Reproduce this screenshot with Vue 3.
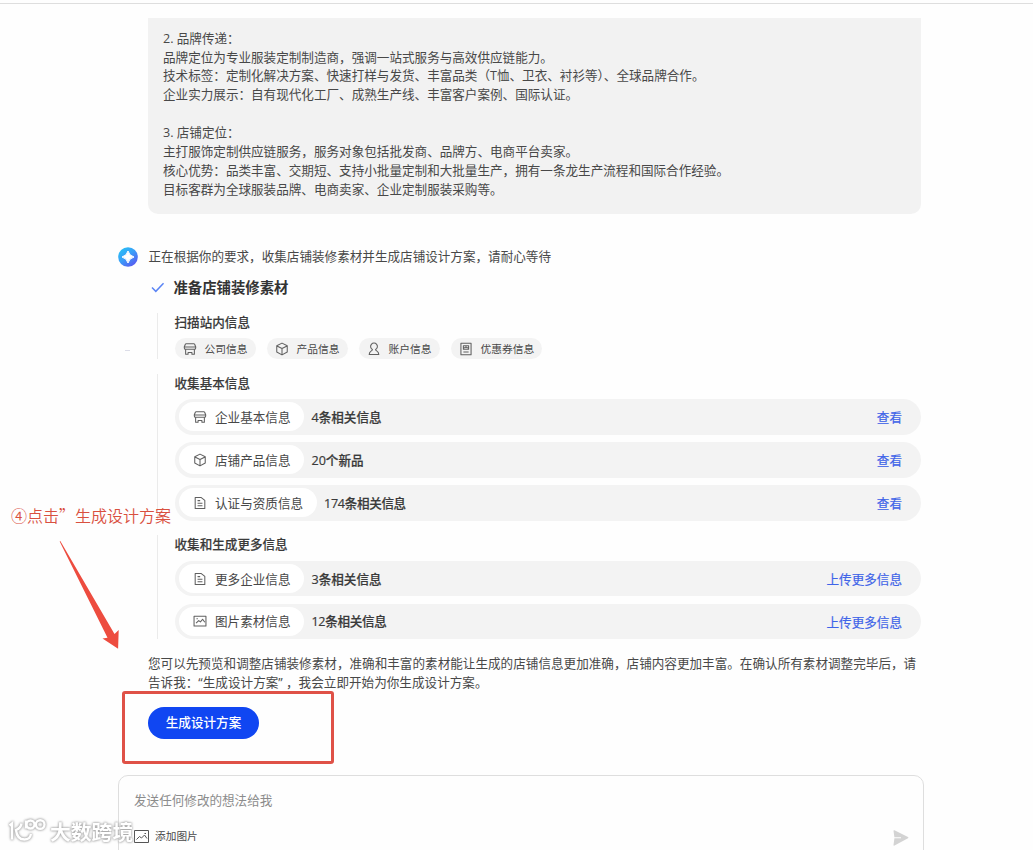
<script setup>
const brief = [
  '2. 品牌传递：',
  '品牌定位为专业服装定制制造商，强调一站式服务与高效供应链能力。',
  '技术标签：定制化解决方案、快速打样与发货、丰富品类（T恤、卫衣、衬衫等）、全球品牌合作。',
  '企业实力展示：自有现代化工厂、成熟生产线、丰富客户案例、国际认证。',
  '',
  '3. 店铺定位：',
  '主打服饰定制供应链服务，服务对象包括批发商、品牌方、电商平台卖家。',
  '核心优势：品类丰富、交期短、支持小批量定制和大批量生产，拥有一条龙生产流程和国际合作经验。',
  '目标客群为全球服装品牌、电商卖家、企业定制服装采购等。',
]

const icons = {
  shop: 'M3.600 2h8.800q.600 0 .900.600l1.200 2.900v1.300q0 1.500-1.500 1.500H3q-1.500 0-1.500-1.500V5.500l1.200-2.900q.300-.600.900-.600zM1.800 5.600h12.400M3 8.500V14h2.800v-2h4.400v2H13V8.500',
  box: 'M8 1.300l6 3v7.200l-6 3.200l-6-3.200V4.300zM2.200 4.500l5.800 3l5.800-3M8 7.500v7',
  user: 'M6.200 8.600a3.900 3.900 0 1 1 3.600 0c0 1.800 3.700 1.400 3.700 5.600h-11c0-4.200 3.700-3.800 3.700-5.600z',
  coupon: 'M2.200 1.500h11.600v13H2.200zM5 4.300h6v4H5zM5 6.500h2l1-1l1 1h2M5 11.500h6',
  doc: 'M2.500 1.800h7L13.500 5v9.200h-11zM5.200 5.300h3M5.200 8.200h5.600M5.200 11.200h5.600',
  image: 'M1.200 2.500h13.600v11.200H1.200zM3.500 10.500l3-3l2 1.500l2.500-3l2.500 3.500M4 5.500h1.500',
}

const chips = [
  { icon: 'shop', label: '公司信息' },
  { icon: 'box', label: '产品信息' },
  { icon: 'user', label: '账户信息' },
  { icon: 'coupon', label: '优惠券信息' },
]

const groups = [
  {
    title: '收集基本信息',
    rows: [
      { icon: 'shop', label: '企业基本信息', count: '4条相关信息', action: '查看' },
      { icon: 'box', label: '店铺产品信息', count: '20个新品', action: '查看' },
      { icon: 'doc', label: '认证与资质信息', count: '174条相关信息', action: '查看', tight: true },
    ],
  },
  {
    title: '收集和生成更多信息',
    rows: [
      { icon: 'doc', label: '更多企业信息', count: '3条相关信息', action: '上传更多信息' },
      { icon: 'image', label: '图片素材信息', count: '12条相关信息', action: '上传更多信息', tight: true },
    ],
  },
]
</script>

<template>
  <main class="page">
    <div class="chat">
      <section class="brief">
        <p v-for="(line, i) in brief" :key="i">{{ line }}</p>
      </section>

      <div class="status">
        <svg class="avatar" viewBox="0 0 20 20">
          <defs>
            <linearGradient id="avatarFill" x1="0" y1="0" x2="0.8" y2="1">
              <stop offset="0" stop-color="#25c8f5" />
              <stop offset="0.5" stop-color="#3a9ff8" />
              <stop offset="1" stop-color="#5a55f0" />
            </linearGradient>
          </defs>
          <circle cx="10" cy="10" r="9.8" fill="url(#avatarFill)" />
          <path d="M10 4q1.200 4.800 6 6q-4.800 1.200-6 6q-1.200-4.800-6-6q4.800-1.200 6-6z" fill="#fff" stroke="#fff" stroke-width="1" stroke-linejoin="round" />
        </svg>
        <span>正在根据你的要求，收集店铺装修素材并生成店铺设计方案，请耐心等待</span>
      </div>

      <div class="body">
        <h2 class="step">
          <svg class="check" viewBox="0 0 14 11"><path d="M1 5.500l4 4L13 1" /></svg>
          <span>准备店铺装修素材</span>
        </h2>

        <section class="group scan">
          <h3>扫描站内信息</h3>
          <div class="chips">
            <span v-for="c in chips" :key="c.label" class="chip">
              <svg class="icon" viewBox="0 0 16 16"><path :d="icons[c.icon]" /></svg>
              <span>{{ c.label }}</span>
            </span>
          </div>
        </section>

        <section v-for="g in groups" :key="g.title" class="group">
          <h3>{{ g.title }}</h3>
          <div class="rows">
            <div v-for="r in g.rows" :key="r.label" class="row">
              <span class="pill">
                <svg class="icon" viewBox="0 0 16 16"><path :d="icons[r.icon]" /></svg>
                <span>{{ r.label }}</span>
              </span>
              <span class="count" :class="{ tight: r.tight }">{{ r.count }}</span>
              <a class="action">{{ r.action }}</a>
            </div>
          </div>
        </section>

        <p class="hint">您可以先预览和调整店铺装修素材，准确和丰富的素材能让生成的店铺信息更加准确，店铺内容更加丰富。在确认所有素材调整完毕后，请<br>告诉我：“生成设计方案” ，我会立即开始为你生成设计方案。</p>
        <button class="generate">生成设计方案</button>
      </div>

      <div class="composer">
        <div class="placeholder">发送任何修改的想法给我</div>
        <div class="tools">
          <svg class="picture" viewBox="0 0 15 13"><path d="M.5.500h14v12H.5zM2.500 9.500l3-3l2 1.500l3-3l2.500 3.500M10.500 3.500h1.500" /></svg>
          <span>添加图片</span>
          <svg class="send" viewBox="0 0 16 16"><path d="M.5.800Q.5 0 1.500.300L15 7q1 .700 0 1.300L1.500 15.600Q.5 16 .5 15L1.400 8.200H8V7.200H1.400z" /></svg>
        </div>
      </div>
    </div>

    <span class="speck"></span>
    <div class="note">④点击”生成设计方案</div>
    <svg class="arrow" viewBox="0 0 62 110"><path d="M1.300 1L55.500 94l4.200-4l-.600 18.700L43.500 98.500l5-.800L.700 1.500z" /></svg>
    <div class="frame"></div>
    <div class="watermark">
      <svg viewBox="0 0 40 28">
        <path d="M1.500 8.500L4 6.500v16M13.500 6.500q-.500 4.500-5.500 6.500q1 9.500 8.500 9.500q5.500 0 6.500-5.500" />
        <path d="M18 3.500v8" />
        <circle cx="22.500" cy="7.500" r="4" />
        <circle cx="32.200" cy="7.500" r="4.300" />
      </svg>
      <span>大数跨境</span>
    </div>
  </main>
</template>

<style>
body {
  margin: 0;
  background: #fefefe;
}
</style>

<style scoped>
.page {
  position: relative;
  box-sizing: border-box;
  height: 850px;
  padding-top: 3px;
  overflow: hidden;
  font-family: "Open Sans", "Noto Sans CJK SC", sans-serif;
  font-size: 12.58px;
  color: #484848;
}
.page::before {
  content: "";
  display: block;
  height: 1px;
  background: #dedede;
}
p, h2, h3 { margin: 0; }
.chat {
  width: 806px;
  margin: 14px 0 0 118px;
}
.brief {
  box-sizing: border-box;
  width: 773px;
  height: 196px;
  margin-left: 30px;
  padding: 11.700px 15px;
  border-radius: 0 0 10px 10px;
  background: #f2f2f2;
}
.brief p {
  height: 18.9px;
  line-height: 18.9px;
  white-space: nowrap;
}
.status {
  display: flex;
  align-items: center;
  gap: 11px;
  height: 20px;
  margin-top: 33px;
}
.status span { padding-bottom: 3px; }
.avatar { width: 20px; height: 20px; margin-left: -.5px; }
.body {
  width: 773px;
  margin-left: 30px;
}
.step {
  display: flex;
  align-items: center;
  height: 22px;
  margin-top: 10px;
  padding-left: 3px;
  gap: 9px;
  font-size: 14.37px;
  font-weight: 700;
  line-height: 22px;
  color: #333;
}
.check { width: 13.500px; height: 11px; margin-top: -2px; fill: none; stroke: #5a84f5; stroke-width: 1.500; }
.group {
  box-sizing: border-box;
  margin: 14.500px 0 0 9px;
  padding-left: 16.500px;
  border-left: 1px solid #ebebeb;
}
.group.scan { margin-top: 14px; }
.group h3 {
  height: 20px;
  font-size: 12.58px;
  font-weight: 500;
  line-height: 19px;
  color: #3a3a3a;
  -webkit-text-stroke: .15px #3a3a3a;
}
.chips { display: flex; gap: 11px; padding-top: 5px; }
.chip {
  display: flex;
  align-items: center;
  gap: 8px;
  height: 21px;
  padding: 0 8px;
  border-radius: 11px;
  background: #f3f3f3;
  font-size: 10.750px;
  line-height: 19px;
}
.chip > span { padding-top: 2px; }
.icon {
  flex: none;
  width: 14px;
  height: 14px;
  fill: none;
  stroke: #606060;
  stroke-width: 1.200;
  stroke-linejoin: round;
}
.rows { display: flex; flex-direction: column; gap: 7.300px; padding-top: 5.500px; }
.row {
  box-sizing: border-box;
  display: flex;
  align-items: center;
  height: 35.700px;
  padding: 0 19px 0 4px;
  border-radius: 18px;
  background: #f3f3f3;
}
.pill {
  display: flex;
  align-items: center;
  gap: 8px;
  height: 29px;
  padding: 0 14px 0 14.500px;
  border-radius: 15px;
  background: #fff;
}
.pill > span { padding-bottom: 1px; }
.count { margin-left: 7px; padding-bottom: 1px; color: #3a3a3a; font-weight: 500; -webkit-text-stroke: .2px #3a3a3a; }
.count.tight { letter-spacing: -.33px; }
.action { margin-left: auto; color: #3f64e8; -webkit-text-stroke: .2px #3f64e8; }
.hint {
  margin-top: 15.500px;
  line-height: 18.9px;
  letter-spacing: .015px;
  white-space: nowrap;
}
.generate {
  display: block;
  width: 111px;
  height: 32px;
  margin-top: 14px;
  padding: 0;
  border: 0;
  border-radius: 16px;
  background: #1046f2;
  color: #fff;
  font: 500 12.58px/32px "Open Sans", "Noto Sans CJK SC", sans-serif;
}
.composer {
  box-sizing: border-box;
  height: 100px;
  margin-top: 36px;
  padding: 15.500px 14px 0 15px;
  border: 1px solid #dedede;
  border-radius: 10px;
}
.placeholder { height: 20px; line-height: 20px; color: #8c8c8c; }
.tools {
  display: flex;
  align-items: center;
  height: 20px;
  margin-top: 15px;
  font-size: 10.700px;
}
.tools span { padding-bottom: 1px; }
.picture { width: 15px; height: 13px; margin-right: 6px; fill: none; stroke: #555; }
.send { width: 16px; height: 16px; margin: 3px 0 0 auto; fill: #d3d3d3; }
.speck {
  position: absolute;
  left: 125px;
  top: 350px;
  width: 5px;
  height: 1px;
  background: #dcdde8;
}
.note {
  position: absolute;
  left: 11px;
  top: 503px;
  font: 350 16px/24px "Noto Sans CJK SC", sans-serif;
  white-space: nowrap;
  color: #d9503f;
}
.arrow {
  position: absolute;
  left: 59px;
  top: 540px;
  width: 62px;
  height: 110px;
  fill: #ed4c3f;
}
.frame {
  position: absolute;
  left: 122px;
  top: 691px;
  box-sizing: border-box;
  width: 212px;
  height: 73px;
  border: 3px solid #df5147;
  border-radius: 3px;
}
.watermark {
  position: absolute;
  left: 8px;
  top: 816px;
  display: flex;
  align-items: center;
  gap: 2px;
  height: 30px;
  font: 700 20.800px/30px "Noto Sans CJK SC", sans-serif;
  color: #fff;
  filter: drop-shadow(0 0 1px #999) drop-shadow(0 0 1px #ccc);
}
.watermark svg {
  width: 40px;
  height: 28px;
  overflow: visible;
  fill: none;
  stroke: #fff;
  stroke-width: 2.400;
}
</style>
